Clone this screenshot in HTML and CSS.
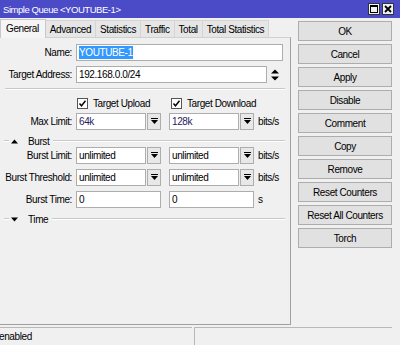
FILE: index.html
```html
<!DOCTYPE html>
<html lang="en">
<head>
<meta charset="UTF-8">
<title>Simple Queue &lt;YOUTUBE-1&gt;</title>
<link rel="stylesheet" href="styles.css">
</head>
<body>
<div class="window">
    <div class="titlebar">
        <span class="title">Simple Queue &lt;YOUTUBE-1&gt;</span>
        <div class="winbtns">
            <span class="winbtn"><svg width="8" height="8" viewBox="0 0 8 8"><rect x="0.5" y="0.5" width="7" height="7" fill="none" stroke="#000"/><rect x="0" y="0" width="8" height="2" fill="#000"/></svg></span>
            <span class="winbtn"><svg width="8" height="8" viewBox="0 0 8 8"><path d="M1 1L7 7M7 1L1 7" stroke="#000" stroke-width="1.8"/></svg></span>
        </div>
    </div>

    <div class="main">
        <div class="left">
            <div class="tabs">
                <div class="tab active">General</div>
                <div class="tab">Advanced</div>
                <div class="tab">Statistics</div>
                <div class="tab">Traffic</div>
                <div class="tab">Total</div>
                <div class="tab">Total Statistics</div>
            </div>
            <div class="panel">
                <div class="row">
                    <label>Name:</label>
                    <div class="field name-field"><span class="sel">YOUTUBE-1</span></div>
                </div>
                <div class="row">
                    <label>Target Address:</label>
                    <div class="field addr-field">192.168.0.0/24</div>
                    <svg class="updown" width="8" height="12" viewBox="0 0 8 12"><polygon points="0,4.5 8,4.5 4,0.5" fill="#000"/><polygon points="0,7.5 8,7.5 4,11.5" fill="#000"/></svg>
                </div>
                <div class="sep"></div>
                <div class="checks">
                    <div class="check"><span class="box"><svg width="9" height="9" viewBox="0 0 9 9"><path d="M1.5 4.5L3.5 6.8L7.5 1.8" fill="none" stroke="#000" stroke-width="1.4"/></svg></span>Target Upload</div>
                    <div class="check"><span class="box"><svg width="9" height="9" viewBox="0 0 9 9"><path d="M1.5 4.5L3.5 6.8L7.5 1.8" fill="none" stroke="#000" stroke-width="1.4"/></svg></span>Target Download</div>
                </div>
                <div class="row">
                    <label>Max Limit:</label>
                    <div class="combo"><div class="field val">64k</div><span class="drop"><svg width="7" height="7" viewBox="0 0 7 7"><rect x="0" y="0" width="7" height="1" fill="#000"/><polygon points="0,2 7,2 3.5,6" fill="#000"/></svg></span></div>
                    <div class="combo"><div class="field val">128k</div><span class="drop"><svg width="7" height="7" viewBox="0 0 7 7"><rect x="0" y="0" width="7" height="1" fill="#000"/><polygon points="0,2 7,2 3.5,6" fill="#000"/></svg></span></div>
                    <span class="unit">bits/s</span>
                </div>

                <div class="group-head">
                    <span class="line short"></span>
                    <svg width="7" height="5" viewBox="0 0 7 5"><polygon points="0,4.5 7,4.5 3.5,0.5" fill="#000"/></svg>
                    <span class="head-text">Burst</span>
                    <span class="line"></span>
                </div>
                <div class="row">
                    <label>Burst Limit:</label>
                    <div class="combo"><div class="field">unlimited</div><span class="drop"><svg width="7" height="7" viewBox="0 0 7 7"><rect x="0" y="0" width="7" height="1" fill="#000"/><polygon points="0,2 7,2 3.5,6" fill="#000"/></svg></span></div>
                    <div class="combo"><div class="field">unlimited</div><span class="drop"><svg width="7" height="7" viewBox="0 0 7 7"><rect x="0" y="0" width="7" height="1" fill="#000"/><polygon points="0,2 7,2 3.5,6" fill="#000"/></svg></span></div>
                    <span class="unit">bits/s</span>
                </div>
                <div class="row">
                    <label>Burst Threshold:</label>
                    <div class="combo"><div class="field">unlimited</div><span class="drop"><svg width="7" height="7" viewBox="0 0 7 7"><rect x="0" y="0" width="7" height="1" fill="#000"/><polygon points="0,2 7,2 3.5,6" fill="#000"/></svg></span></div>
                    <div class="combo"><div class="field">unlimited</div><span class="drop"><svg width="7" height="7" viewBox="0 0 7 7"><rect x="0" y="0" width="7" height="1" fill="#000"/><polygon points="0,2 7,2 3.5,6" fill="#000"/></svg></span></div>
                    <span class="unit">bits/s</span>
                </div>
                <div class="row">
                    <label>Burst Time:</label>
                    <div class="field time-field">0</div>
                    <div class="field time-field">0</div>
                    <span class="unit">s</span>
                </div>

                <div class="group-head time-head">
                    <span class="line short"></span>
                    <svg width="7" height="5" viewBox="0 0 7 5"><polygon points="0,0.5 7,0.5 3.5,4.5" fill="#000"/></svg>
                    <span class="head-text">Time</span>
                    <span class="line"></span>
                </div>
            </div>
        </div>

        <div class="right">
            <div class="btn-group">
                <button>OK</button>
                <button>Cancel</button>
                <button>Apply</button>
            </div>
            <div class="btn-group">
                <button>Disable</button>
                <button>Comment</button>
                <button>Copy</button>
                <button>Remove</button>
            </div>
            <div class="btn-group">
                <button>Reset Counters</button>
                <button>Reset All Counters</button>
                <button>Torch</button>
            </div>
        </div>
    </div>

    <div class="status">
        <div class="cell first">enabled</div>
        <div class="cell second"></div>
    </div>
</div>
</body>
</html>
```

FILE: styles.css
```css
body {
    margin: 0;
    padding: 0;
    background-color: #f0f0f0;
    font-family: "Liberation Sans", Arial, sans-serif;
    font-size: 10px;
    letter-spacing: -0.4px;
    color: #000;
}
.window {
    width: 400px;
    height: 345px;
    display: flex;
    flex-direction: column;
    overflow: hidden;
}
.titlebar {
    height: 18px;
    background-color: #4b4bc8;
    display: flex;
    align-items: center;
    padding-left: 3px;
    padding-right: 6px;
}
.title {
    color: #fff;
    flex: 1;
    font-size: 9.5px;
    letter-spacing: -0.45px;
}
.winbtns {
    display: flex;
    gap: 2px;
}
.winbtn {
    width: 10px;
    height: 10px;
    border: 1px solid #333;
    background-color: #f0f0f0;
    display: flex;
    align-items: center;
    justify-content: center;
}
.main {
    height: 309px;
    display: flex;
}
.left {
    width: 291px;
    display: flex;
    flex-direction: column;
}
.tabs {
    height: 19px;
    display: flex;
    align-items: flex-end;
    padding-left: 2px;
}
.tab {
    height: 17px;
    line-height: 17px;
    box-sizing: border-box;
    padding: 0 4px;
    border: 1px solid #d4d4d4;
    border-bottom: none;
    margin-right: -1px;
    background-color: #e6e6e6;
}
.tab.active {
    height: 19px;
    line-height: 18px;
    background-color: #f5f5f5;
    border-color: #c8c8c8;
    position: relative;
    z-index: 1;
    margin-bottom: -1px;
    margin-left: -2px;
    padding: 0 6px 0 5px;
}
.panel {
    height: 288px;
    box-sizing: border-box;
    border-top: 1px solid #d0d0d0;
    border-right: 1px solid #a0a0a0;
    border-bottom: 1px solid #a0a0a0;
    padding-top: 6px;
}
.row {
    display: flex;
    align-items: center;
    height: 17px;
    margin-bottom: 5px;
}
.row label {
    width: 72px;
    text-align: right;
    margin-right: 4px;
    white-space: nowrap;
}
.field {
    height: 17px;
    box-sizing: border-box;
    border: 1px solid #adadad;
    background-color: #fff;
    padding: 0 2px;
    line-height: 15px;
    white-space: nowrap;
    overflow: hidden;
}
.name-field {
    width: 207px;
}
.sel {
    background-color: #3399ff;
    color: #fff;
    padding: 1px 0;
}
.addr-field {
    width: 191px;
}
.updown {
    margin-left: 4px;
}
.sep {
    margin: 0 5px;
    border-top: 1px solid #c8c8c8;
    border-bottom: 1px solid #fff;
}
.checks {
    display: flex;
    align-items: center;
    height: 14px;
    margin-top: 6px;
    margin-bottom: 3px;
    padding-left: 77px;
}
.check {
    display: flex;
    align-items: center;
    width: 94px;
}
.box {
    width: 11px;
    height: 11px;
    box-sizing: border-box;
    border: 1px solid #555;
    background-color: #fff;
    display: flex;
    align-items: center;
    justify-content: center;
    margin-right: 5px;
}
.combo {
    display: flex;
    width: 85px;
    margin-right: 8px;
}
.combo .field {
    width: 70px;
}
.val {
    color: #2a1a5e;
}
.drop {
    width: 14px;
    height: 17px;
    box-sizing: border-box;
    margin-left: 1px;
    border: 1px solid #adadad;
    background-color: #e8e8e8;
    display: flex;
    align-items: center;
    justify-content: center;
}
.unit {
    margin-left: -4px;
}
.time-field {
    width: 85px;
    margin-right: 8px;
}
.group-head {
    display: flex;
    align-items: center;
    height: 12px;
    margin-top: 1px;
    padding: 0 5px 0 4px;
}
.group-head.time-head {
    margin-top: 0;
}
.group-head svg {
    margin-left: 2px;
}
.line {
    flex: 1;
    border-top: 1px solid #c8c8c8;
    border-bottom: 1px solid #fff;
}
.line.short {
    flex: none;
    width: 5px;
}
.head-text {
    margin-left: 10px;
    margin-right: 4px;
}
.right {
    flex: 1;
    padding: 3px 0 0 7px;
}
.btn-group {
    margin-bottom: 3px;
}
button {
    display: block;
    width: 94px;
    height: 20px;
    margin-bottom: 3px;
    padding: 0;
    font-family: inherit;
    font-size: 10px;
    letter-spacing: -0.4px;
    color: #000;
    background-color: #e1e1e1;
    border: 1px solid #adadad;
}
.status {
    height: 18px;
    display: flex;
}
.cell {
    box-sizing: border-box;
    height: 18px;
    border-top: 1px solid #b8b8b8;
    line-height: 17px;
}
.cell.first {
    width: 193px;
    margin-left: -1px;
}
.cell.second {
    width: 198px;
    margin-left: 2px;
    border-left: 1px solid #b8b8b8;
}
```
